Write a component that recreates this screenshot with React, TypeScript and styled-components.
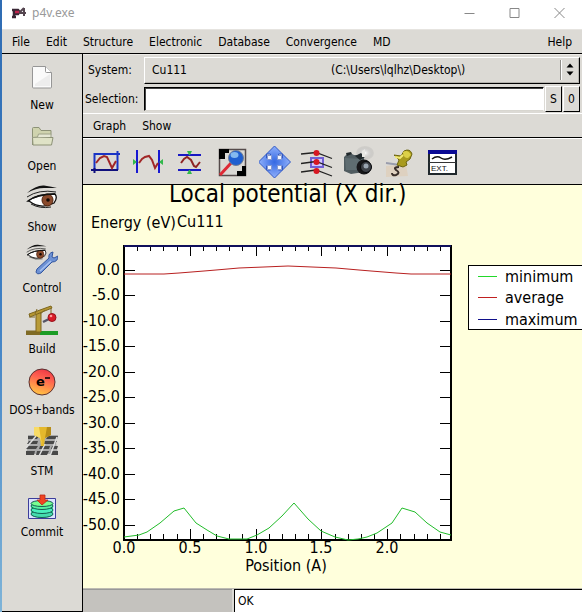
import React from "react";
import styled, { createGlobalStyle } from "styled-components";

const UI = '"DejaVu Sans Condensed", "Noto Sans", sans-serif';
const GREY = "#dcdad5";

const Global = createGlobalStyle`
  * { box-sizing: border-box; }
  html, body { margin: 0; padding: 0; }
  body { font: 12px/16px ${UI}; color: #000; }
  button, input, select { font: inherit; color: inherit; }
`;

const Desktop = styled.div`
  min-height: 100vh;
  display: flex;
  padding-left: 2px;
  background: linear-gradient(#2f6cb3, #3f80c4 50%, #7fb4d8);
`;

const Window = styled.div`
  flex: 1;
  min-width: 0;
  display: flex;
  flex-direction: column;
  background: #fff;
`;

const TitleBar = styled.header`
  height: 29px;
  display: flex;
  align-items: center;
  gap: 5px;
  padding: 0 14px 4px 8px;
`;

const Title = styled.h1`
  flex: 1;
  margin: 0;
  font: 12px/16px "Noto Sans", sans-serif;
  color: #999;
`;

const WindowButtons = styled.div`
  display: flex;
  gap: 28px;
`;

const BareButton = styled.button`
  display: flex;
  align-items: center;
  justify-content: center;
  padding: 0;
  border: 0;
  background: none;
`;

const MenuBar = styled.nav<{ $inset?: boolean }>`
  height: 25px;
  display: flex;
  align-items: center;
  gap: 16px;
  padding: 0 10px;
  background: ${GREY};
  border-top: 1px solid ${(p) => (p.$inset ? "#fff" : "#e6e4e0")};
  border-bottom: 1px solid #000;
`;

const MenuItem = styled(BareButton)<{ $last?: boolean }>`
  margin-left: ${(p) => (p.$last ? "auto" : "0")};
`;

const Body = styled.div`
  flex: 1;
  display: flex;
  min-height: 0;
`;

const Sidebar = styled.nav`
  width: 81px;
  flex: none;
  display: flex;
  flex-direction: column;
  align-items: center;
  gap: 9px;
  padding-top: 7px;
  margin-bottom: 1px;
  background: ${GREY};
  border-right: 1px solid #000;
  border-bottom: 1px solid #000;
`;

const SideButton = styled(BareButton)`
  flex-direction: column;
  gap: 4px;
  white-space: nowrap;
`;

const Main = styled.main`
  flex: 1;
  min-width: 0;
  display: flex;
  flex-direction: column;
  background: ${GREY};
`;

const SystemRow = styled.div`
  display: flex;
  align-items: center;
  height: 31px;
  padding: 2px 2px 2px 5px;
  border-top: 1px solid #eceae6;
`;

const RowLabel = styled.label`
  width: 56px;
  flex: none;
`;

const SelectBox = styled.div`
  flex: 1;
  min-width: 0;
  height: 27px;
  position: relative;
`;

const SystemSelect = styled.select`
  appearance: none;
  width: 100%;
  height: 100%;
  padding: 0 24px 0 7px;
  border: 1px solid;
  border-color: #fff #000 #000 #fff;
  border-radius: 0;
  background: ${GREY};
  box-shadow: inset -1px -1px #b5b3ae;
`;

const SelectArrows = styled.svg`
  position: absolute;
  right: 1px;
  top: 2px;
  pointer-events: none;
`;

const SelectionRow = styled.div`
  display: flex;
  align-items: center;
  height: 28px;
  padding: 0 2px;
`;

const SelectionLabel = styled.label`
  width: 59px;
  flex: none;
`;

const SelectionInput = styled.input`
  flex: 1;
  min-width: 0;
  height: 24px;
  border: 1px solid;
  border-color: #000 #fff #d8d6d0 #000;
  box-shadow: inset 1px 1px #444;
  background: #fff;
`;

const SmallButton = styled(BareButton)`
  width: 17px;
  height: 26px;
  margin-left: 1px;
  border: 1px solid;
  border-color: #fff #000 #000 #fff;
  background: ${GREY};
`;

const Toolbar = styled.div`
  height: 47px;
  display: flex;
  align-items: center;
  padding: 0 3px;
  border-top: 1px solid #fff;
  border-bottom: 1px solid #000;
`;

const ToolButton = styled(BareButton)`
  width: 42px;
  height: 40px;
`;

const ChartArea = styled.section`
  flex: 1;
  background: #ffffdc;
  border-bottom: 1px solid #bdbbb2;
`;

const ChartSvg = styled.svg`
  display: block;
  width: 100%;
  overflow: visible;
  font-family: ${UI};
  font-size: 16px;
`;

const StatusBar = styled.footer`
  height: 24px;
  display: flex;
  gap: 2px;
  padding-bottom: 1px;
`;

const Progress = styled.div`
  width: 149px;
  flex: none;
  background: #c4c2be;
  border-top: 1px solid #999;
`;

const Status = styled.output`
  flex: 1;
  padding: 3px;
  background: #fff;
  border: 1px solid #000;
  border-width: 1px 0 0 1px;
`;

const Icon = ({ children, size = 32 }: { children: React.ReactNode; size?: number }) => (
  <svg width={size} height={size} viewBox="0 0 32 32" fill="none" aria-hidden="true">
    {children}
  </svg>
);

const NewIcon = () => (
  <Icon>
    <path d="M7 5.5h12.500l6 6V26a1 1 0 0 1-1 1H7.500a1 1 0 0 1-1-1V6.500z" fill="#fafafa" stroke="#969696" />
    <path d="M9 25h15V13L9 23z" fill="#ededed" />
    <path d="M19.500 5.500v5q0 1 1 1h5" fill="#fff" stroke="#969696" />
  </Icon>
);

const OpenIcon = () => (
  <Icon>
    <path d="M6.500 23V6.500q0-1 1-1h5.500l2 3h10v4" fill="#cfd3ae" stroke="#8d9277" />
    <path d="M6.500 15.500h20.500l-1.500 7.500H7z" fill="#dfe2c6" stroke="#8d9277" />
    <path d="M6.500 15.500l5-.5 1-3h12.500v3" fill="#e5e7d3" stroke="#9ea288" />
  </Icon>
);

const Eye = () => (
  <>
    <path d="M1 10Q10 2 18 2.500q8 1 13 2.500-8 0-13 0Q10 5 1 10z" fill="#111" />
    <path d="M2 18q9-7 27-7 3 4-1 9-13 7-25-2z" fill="#fff" stroke="#111" strokeWidth="1.300" />
    <path d="M1 14Q13 6 30 9M5 21q9 5 20 3" stroke="#222" />
    <ellipse cx="21.500" cy="17" rx="5.500" ry="6" fill="#8a4a2c" stroke="#50240f" />
    <circle cx="22" cy="17" r="1.800" fill="#110804" />
    <path d="M2 18q9-7 27-7" stroke="#111" strokeWidth="1.500" />
  </>
);

const ShowIcon = () => <Icon><Eye /></Icon>;

const ControlIcon = () => (
  <Icon>
    <g transform="translate(0 -1) scale(.66)"><Eye /></g>
    <path d="M12 26l12-11q-1-5 4-6l-1 5 2 1 4-2q0 6-6 6L16 30q-4 2-5-1z" transform="translate(-1 -1)" fill="#6d91d4" stroke="#33569f" />
    <path d="M14 27l11-10" stroke="#a8c2ef" strokeWidth="1.500" />
  </Icon>
);

const BuildIcon = () => (
  <Icon>
    <path d="M0 25.500h14V30H0z" fill="#806b25" />
    <path d="M14 26h18v4H14z" fill="#1c9c25" />
    <path d="M10 7h5v20h-5z" fill="#b89b38" stroke="#80671d" />
    <path d="M3 9L25 1l1 2L4 12z" fill="#b59632" stroke="#7d661e" />
    <path d="M3 12h6M9 9l2-5M14 9l5-4M25 3v8" stroke="#806a28" />
    <path d="M17 17l8-4" stroke="#556" strokeWidth="2.500" />
    <circle cx="26" cy="12.500" r="4" fill="#d91c27" stroke="#96121b" />
    <circle cx="25" cy="11" r="1.300" fill="#f99" />
  </Icon>
);

const DosIcon = () => (
  <Icon>
    <defs>
      <linearGradient id="electron" x1="0.300" y1="1" x2="0.600" y2="0">
        <stop offset="0" stopColor="#ffc944" />
        <stop offset=".65" stopColor="#ff6250" />
        <stop offset="1" stopColor="#ef3945" />
      </linearGradient>
    </defs>
    <circle cx="16" cy="16" r="13" fill="url(#electron)" stroke="#5b3030" />
    <text x="10" y="20" fontFamily="DejaVu Sans" fontWeight="700" fontSize="13" fill="#000">e</text>
    <path d="M19 12h5" stroke="#000" strokeWidth="1.500" />
  </Icon>
);

const StmIcon = () => (
  <Icon>
    <g transform="translate(0 -1)">
      <path d="M2 9h30l-2 8 2 11H0l2-9z" fill="#aaa" />
      <path d="M2 10h11l-2 3H2zM22 10h10l-1 3H20zM3 15h9l-1 3H1zM19 15h12l-2 3H18zM2 20h10l-2 3H0zM14 20h10l-1 3H13zM0 25h9l-1 4H0zM11 25h12l-2 4H10zM26 20h6l-1 3h-6zM25 25h7v4h-8z" fill="#484848" />
      <path d="M0 22L10 10M13 30l6-12M24 30l7-19" stroke="#ddd" strokeWidth="1.500" />
      <path d="M8 1h17v8l-6 3-1 8h-3l-1-8-6-3z" fill="#e5b82c" />
      <path d="M8 1h5l3 18-2-7-6-3z" fill="#f8db66" />
      <path d="M21 1h4v8l-6 3z" fill="#b88d17" />
    </g>
  </Icon>
);

const CommitIcon = () => (
  <Icon>
    <g transform="translate(0 -1)">
      <path d="M2.500 11.500h27v20h-27z" fill="#dce4ff" stroke="#3d3d9b" />
      <path d="M5 16v12c5 4 17 4 22 0V16z" fill="#41eea3" />
      <ellipse cx="16" cy="27" rx="11" ry="3.500" fill="#45dcae" stroke="#155e52" />
      <ellipse cx="16" cy="23" rx="11" ry="3.500" fill="#49efbd" stroke="#155e52" />
      <ellipse cx="16" cy="19" rx="11" ry="3.500" fill="#58f2a2" stroke="#155e52" />
      <ellipse cx="16" cy="16.500" rx="11" ry="3" fill="#78ff92" stroke="#155e52" />
      <path d="M14 8h5v5h3l-6 5-5-5h3z" fill="#f04422" stroke="#b92a16" strokeWidth=".8" />
    </g>
  </Icon>
);

const FrameIcon = () => (
  <Icon>
    <path d="M3.500 24V8H29" stroke="#1a34c5" strokeWidth="2" />
    <path d="M26.500 5v19" stroke="#1a34c5" strokeWidth="2" />
    <path d="M0 24h27M3.500 22v5" stroke="#10107d" strokeWidth="2" />
    <path d="M5 17l4-5 4-2 3 1 5 11 4-7" stroke="#a12727" strokeWidth="2" />
  </Icon>
);

const WidthIcon = () => (
  <Icon>
    <path d="M4 4v23M26 4v23" stroke="#1818d2" strokeWidth="2" />
    <path d="M0 13l4 3-4 3zM30 13l-4 3 4 3z" fill="#32b84b" />
    <path d="M6 17l3-4 3-2 4-1 3 4 3 8 3-5" stroke="#a12727" strokeWidth="2" />
  </Icon>
);

const HeightIcon = () => (
  <Icon>
    <path d="M3 9h23M3 24h23" stroke="#1818c4" strokeWidth="2" />
    <path d="M12 5h5l-2 4h-1zM12 28h5l-2-4h-1z" fill="#32b84b" />
    <path d="M6 17l3-4 3-2 4 3 3 6 2 1 4-5" stroke="#8e2424" strokeWidth="2" />
  </Icon>
);

const ZoomIcon = () => (
  <Icon>
    <path d="M2.500 3.500h26v26h-26z" fill="#dad8d4" stroke="#554b4b" strokeWidth="1.500" />
    <path d="M2 3h10v4H8v6H2zM29 30H20v-5h5v-5h4z" fill="#000" />
    <path d="M3 29l12-13" stroke="#de2935" strokeWidth="3" />
    <circle cx="19" cy="12" r="7.500" fill="#1f5fd0" stroke="#707e95" />
    <ellipse cx="17.500" cy="9" rx="4" ry="3" fill="#84b9ef" />
  </Icon>
);

const MoveIcon = () => (
  <Icon>
    <defs>
      <radialGradient id="move">
        <stop offset="0" stopColor="#3568e2" />
        <stop offset="1" stopColor="#8fb0fb" />
      </radialGradient>
    </defs>
    <path d="M15.500 0l8 8h-4v4h4V8l8 8-8 8v-4h-4v4h4l-8 8-8-8h4v-4h-4v4l-8-8 8-8v4h4V8h-4z" fill="url(#move)" stroke="#3158c4" />
    <path d="M8.500 9.500h4v4h-4zM18.500 9.500h4v4h-4zM8.500 19.500h4v4h-4zM18.500 19.500h4v4h-4z" fill="#f4f6ff" stroke="#8598cf" />
  </Icon>
);

const LevelsIcon = () => (
  <Icon>
    <path d="M10 12h12v9H10z" fill="#d3c7ff" stroke="#7160d5" strokeWidth="2" />
    <path d="M0 8l15-1.500 16 6M0 17.500l15-2 16 6M0 26l15-2 16 6" stroke="#222" strokeWidth="1.300" />
    {[7, 16, 25].map((y) => <circle key={y} cx="15.500" cy={y} r="3" fill="#d71823" />)}
  </Icon>
);

const CameraIcon = () => (
  <Icon>
    <defs>
      <radialGradient id="flash"><stop stopColor="#fff" /><stop offset="1" stopColor="#999" stopOpacity=".15" /></radialGradient>
    </defs>
    <ellipse cx="22" cy="7" rx="9" ry="7" fill="url(#flash)" />
    <path d="M1 11l3-3h5l2 1h5l5 2v15l-13 2-7-3z" fill="#505c60" />
    <path d="M2 12l17 1v11L3 24z" fill="#5f6d71" />
    <path d="M3 7l5-1 1 2-5 2zM12 10l6-3 4 4-5 3z" fill="#20282b" />
    <circle cx="21" cy="21" r="7.500" fill="#171719" />
    <circle cx="23" cy="21" r="5.500" fill="#3d4147" stroke="#08090b" />
    <circle cx="23" cy="20" r="2.500" fill="#9aa5b1" />
    <path d="M19 11V5l3-2v8" fill="#e8e8e4" />
  </Icon>
);

const PinIcon = () => (
  <Icon>
    <path d="M1 20l20-2 2 12-22 1z" fill="#ded1c0" />
    <path d="M14 21q-6 0-3 3 5 3 0 5-4 1-4-2" stroke="#392e29" strokeWidth="2" />
    <path d="M1 17l14 2" stroke="#999cac" strokeWidth="2" />
    <path d="M9 9l7 1 3-5q6-3 8 3l-2 5-4 3 1 3-4 2-6-2 2-5z" fill="#a99b1e" stroke="#6d6510" />
    <path d="M18 6q5-3 8 3l-3 3q-5 0-5-6z" fill="#dcd048" />
    <path d="M10 11l5 1 3-3" stroke="#f1e977" strokeWidth="2" />
  </Icon>
);

const ExtIcon = () => (
  <Icon>
    <path d="M2 5h27v23H2z" fill="#fff" stroke="#20282c" strokeWidth="2" />
    <path d="M1 4h29v4H1z" fill="#090994" />
    <path d="M2 16.500h27" stroke="#333" />
    <path d="M5 13q5-4 9-1t11-1" stroke="#111" strokeWidth="1.500" />
    <text x="4" y="25" fontFamily="Liberation Sans" fontSize="8" fill="#111">EXT.</text>
  </Icon>
);

const AppLogo = () => (
  <svg width="17" height="14" viewBox="0 0 17 14" fill="none" aria-hidden="true">
    <path d="M4 11V4h4q2 2 0 4H4M2 4h3M2 11h4" stroke="#392735" strokeWidth="2.500" />
    <path d="M5 6h4" stroke="#c0254f" strokeWidth="2.500" />
    <path d="M14 2v8M14 2l-4 4v1h6" stroke="#554650" strokeWidth="2" />
  </svg>
);

const sideItems: [string, React.FC][] = [
  ["New", NewIcon], ["Open", OpenIcon], ["Show", ShowIcon], ["Control", ControlIcon],
  ["Build", BuildIcon], ["DOS+bands", DosIcon], ["STM", StmIcon], ["Commit", CommitIcon],
];

const tools: [string, React.FC][] = [
  ["Full range", FrameIcon], ["Fit width", WidthIcon], ["Fit height", HeightIcon],
  ["Zoom", ZoomIcon], ["Move", MoveIcon], ["Levels", LevelsIcon],
  ["Snapshot", CameraIcon], ["Pin", PinIcon], ["External window", ExtIcon],
];

const menus = ["File", "Edit", "Structure", "Electronic", "Database", "Convergence", "MD"];

const plot = { left: 41, right: 368, top: 61, bottom: 355 };
const yTicks = Array.from({ length: 11 }, (_, i) => ({
  y: Math.round(85 + i * 25.45) + 0.5,
  label: i ? `-${i * 5}.0` : "0.0",
}));
const xTicks = Array.from({ length: 24 }, (_, i) => ({
  x: Math.round(41 + (i + 1) * 13.16) + 0.5,
  major: (i + 1) % 5 === 0,
}));
const xLabels = ["0.0", "0.5", "1.0", "1.5", "2.0"];

const minimum = "41,352 56,350 64,347 77,338 91,326 101,323 113,338 124,345 134,351 146,354 164,354 174,350 186,343 199,331 211,318 225,334 238,346 252,352 265,355 275,354 284,352 294,348 309,338 319,323 332,327 344,338 357,347 368,350";
const average = "41,89 81,89 96,88 121,86 133,85 156,83 181,82 205,81 229,82 253,83 276,85 288,86 313,88 328,89 368,89";

const legend = [
  { name: "minimum", color: "#22d82a", y: 91 },
  { name: "average", color: "#c02020", y: 112 },
  { name: "maximum", color: "#10108a", y: 134 },
];

const Chart = () => (
  <ChartSvg viewBox="0 0 499 403" role="img" aria-label="Local potential (X dir.)">
    <text x="86" y="17" fontSize="24">Local potential (X dir.)</text>
    <text x="8" y="43">Energy (eV)</text>
    <text x="94" y="42">Cu111</text>
    <rect x={plot.left} y={plot.top} width={plot.right - plot.left} height={plot.bottom - plot.top} fill="#fff" stroke="#000" strokeWidth="2" />
    {yTicks.map(({ y, label }) => (
      <React.Fragment key={label}>
        <path d={`M${plot.left} ${y}h11M${plot.right} ${y}h-11`} stroke="#000" />
        <text x="37" y={y + 4.5} textAnchor="end">{label}</text>
      </React.Fragment>
    ))}
    {xTicks.map(({ x, major }) => (
      <path key={x} d={`M${x} ${plot.top}v${major ? 10 : 5}M${x} ${plot.bottom}v${major ? -11 : -6}`} stroke="#000" />
    ))}
    {xLabels.map((label, i) => (
      <text key={label} x={Math.round(41 + i * 65.8)} y="368" textAnchor="middle">{label}</text>
    ))}
    <polyline points={average} fill="none" stroke="#b82020" />
    <polyline points={minimum} fill="none" stroke="#22bc2a" />
    <path d={`M${plot.left} ${plot.top}H${plot.right}`} stroke="#10105c" strokeWidth="2" />
    <text x="203" y="386" textAnchor="middle">Position (A)</text>
    <rect x="385.500" y="80.500" width="120" height="64" fill="#fff" stroke="#000" />
    {legend.map(({ name, color, y }) => (
      <g key={name}>
        <path d={`M395 ${y + 0.5}h19`} stroke={color} />
        <text x="422" y={y + 6}>{name}</text>
      </g>
    ))}
  </ChartSvg>
);

const systemName = "Cu111" + "\u00a0".repeat(42) + "(C:\\Users\\lqlhz\\Desktop\\)";

export default function App() {
  return (
    <Desktop>
      <Global />
      <Window>
        <TitleBar>
          <AppLogo />
          <Title>p4v.exe</Title>
          <WindowButtons>
            {[["Minimize", "M3 8.5h10"], ["Maximize", "M3.500 3.500h9v9h-9z"], ["Close", "M3 3l10 10M13 3L3 13"]].map(([label, d]) => (
              <BareButton key={label} aria-label={label}>
                <svg width="17" height="16" viewBox="0 0 16 16" fill="none" stroke="#888"><path d={d} /></svg>
              </BareButton>
            ))}
          </WindowButtons>
        </TitleBar>
        <MenuBar aria-label="Main menu">
          {menus.map((m) => <MenuItem key={m}>{m}</MenuItem>)}
          <MenuItem $last>Help</MenuItem>
        </MenuBar>
        <Body>
          <Sidebar aria-label="Tasks">
            {sideItems.map(([label, Glyph]) => (
              <SideButton key={label}><Glyph />{label}</SideButton>
            ))}
          </Sidebar>
          <Main>
            <SystemRow>
              <RowLabel htmlFor="system">System:</RowLabel>
              <SelectBox>
                <SystemSelect id="system"><option>{systemName}</option></SystemSelect>
                <SelectArrows width="19" height="22" viewBox="0 0 19 22" aria-hidden="true">
                  <path d="M.5 1v20" stroke="#8e8c88" />
                  <path d="M1.500 1v20" stroke="#fff" />
                  <path d="M10 4.500l3.500 4h-7zM10 16.500l3.500-4h-7z" fill="#000" />
                </SelectArrows>
              </SelectBox>
            </SystemRow>
            <SelectionRow>
              <SelectionLabel htmlFor="selection">Selection:</SelectionLabel>
              <SelectionInput id="selection" />
              <SmallButton>S</SmallButton>
              <SmallButton>0</SmallButton>
            </SelectionRow>
            <MenuBar $inset aria-label="Graph menu">
              <MenuItem>Graph</MenuItem>
              <MenuItem>Show</MenuItem>
            </MenuBar>
            <Toolbar role="toolbar">
              {tools.map(([label, Glyph]) => (
                <ToolButton key={label} aria-label={label}><Glyph /></ToolButton>
              ))}
            </Toolbar>
            <ChartArea><Chart /></ChartArea>
            <StatusBar>
              <Progress />
              <Status>OK</Status>
            </StatusBar>
          </Main>
        </Body>
      </Window>
    </Desktop>
  );
}
